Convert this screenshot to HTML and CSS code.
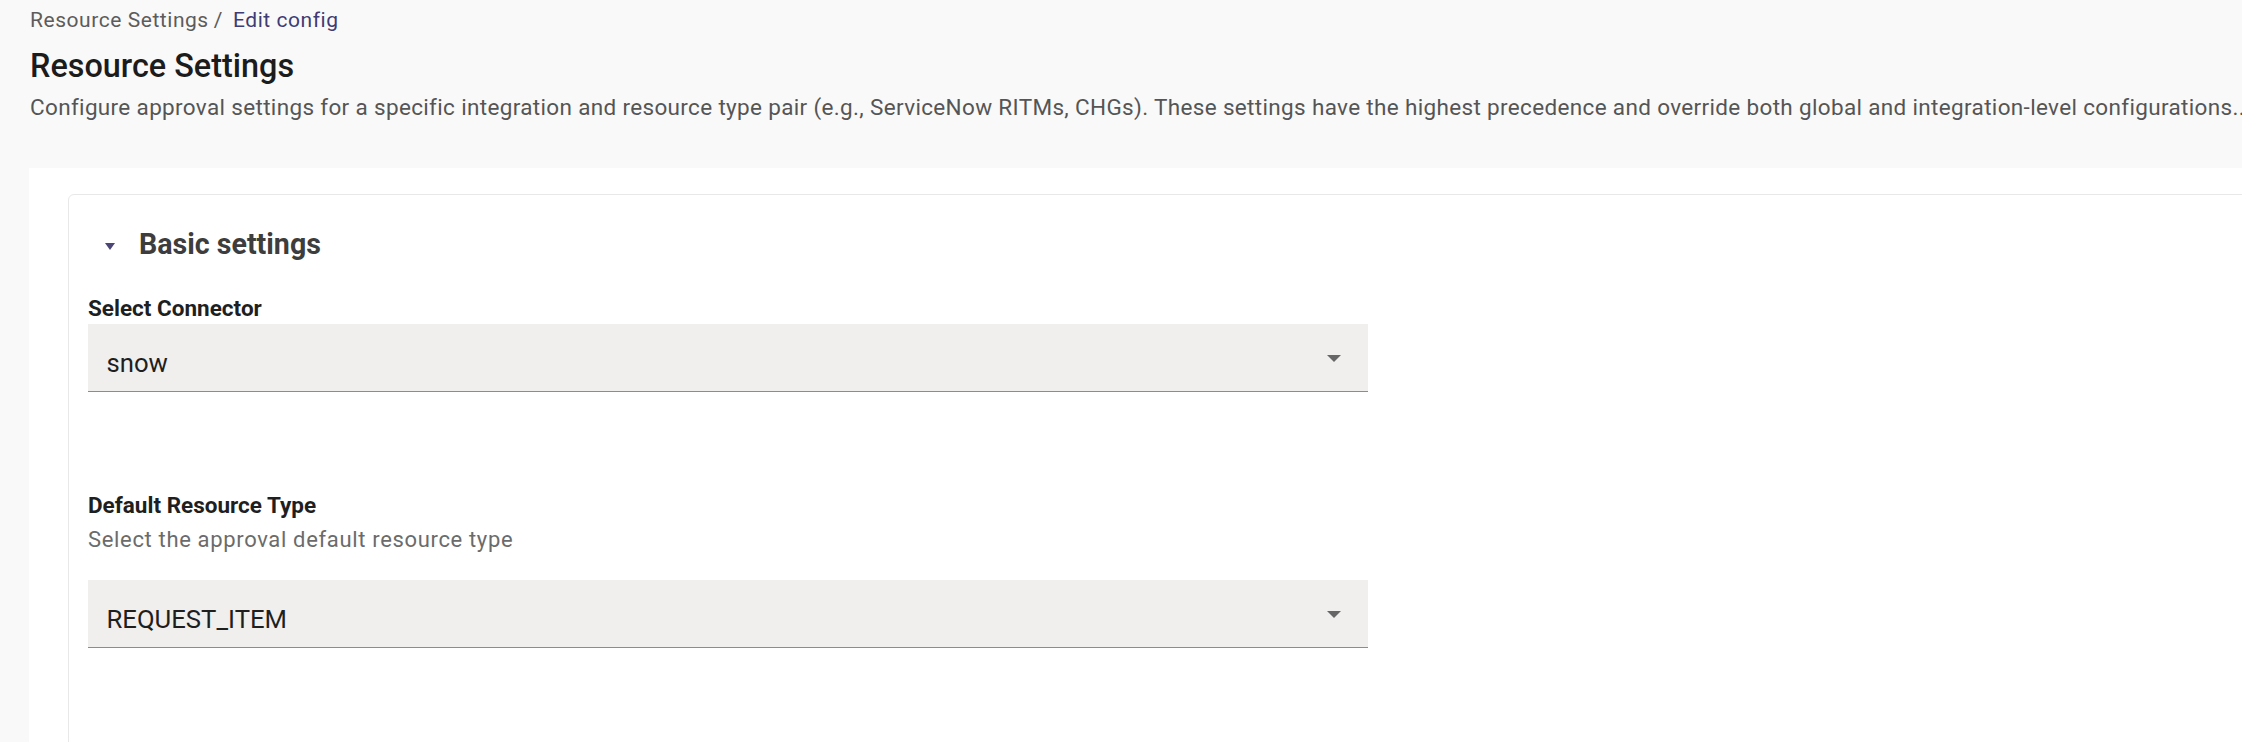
FILE: index.html
```html
<!DOCTYPE html>
<html lang="en">
<head>
<meta charset="utf-8">
<title>Resource Settings</title>
<link rel="stylesheet" href="styles.css">
</head>
<body>
<header class="page-header">
  <nav class="breadcrumb">
    <span class="crumb">Resource Settings</span><span class="sep">/</span><a class="crumb-current">Edit config</a>
  </nav>
  <h1 class="title">Resource Settings</h1>
  <p class="description">Configure approval settings for a specific integration and resource type pair (e.g., ServiceNow RITMs, CHGs). These settings have the highest precedence and override both global and integration-level configurations..</p>
</header>
<main class="content">
  <section class="card">
    <div class="section-head">
      <svg class="section-caret" width="10" height="7" viewBox="0 0 10 7"><path d="M0 0 L10 0 L5 7 Z" fill="#4b4676"/></svg>
      <h2 class="section-title">Basic settings</h2>
    </div>
    <div class="field field-first">
      <label class="field-label">Select Connector</label>
      <div class="select">
        <span class="select-value">snow</span>
        <svg class="select-caret" width="14" height="7" viewBox="0 0 14 7"><path d="M0 0 L14 0 L7 7 Z" fill="#666"/></svg>
      </div>
    </div>
    <div class="field field-second">
      <label class="field-label">Default Resource Type</label>
      <div class="field-help">Select the approval default resource type</div>
      <div class="select select-spaced">
        <span class="select-value">REQUEST_ITEM</span>
        <svg class="select-caret" width="14" height="7" viewBox="0 0 14 7"><path d="M0 0 L14 0 L7 7 Z" fill="#666"/></svg>
      </div>
    </div>
  </section>
</main>
</body>
</html>
```
FILE: styles.css
```css
* { box-sizing: border-box; }
html, body {
  margin: 0;
  padding: 0;
  height: 100%;
  overflow: hidden;
}
body {
  background: #f9f9f9;
  font-family: Roboto, "Liberation Sans", Arial, sans-serif;
  color: #1f1f1f;
}
.page-header {
  padding: 6px 0 46px 30px;
}
.breadcrumb {
  font-size: 21px;
  line-height: 28px;
  letter-spacing: 0.55px;
  color: #5c5c5c;
  white-space: nowrap;
}
.sep {
  margin: 0 10px 0 5px;
}
.crumb-current {
  color: #3f3b75;
}
.title {
  margin: 11.5px 0 0;
  font-size: 32.4px;
  line-height: 40px;
  font-weight: 500;
  color: #1c1c1c;
}
.description {
  margin: 6.5px 0 0;
  font-size: 22.5px;
  line-height: 30px;
  letter-spacing: 0.34px;
  color: #555555;
  white-space: nowrap;
}
.content {
  margin-left: 29px;
  width: 2400px;
  height: 600px;
  background: #ffffff;
  padding: 26px 0 0 39px;
}
.card {
  border: 1px solid #e8e8e8;
  border-radius: 6px;
  height: 800px;
  padding: 29px 0 0 19px;
}
.section-head {
  display: flex;
  align-items: center;
  height: 40px;
}
.section-caret {
  margin-left: 17px;
  margin-right: 24px;
  margin-top: 4px;
}
.section-title {
  margin: 0;
  font-size: 28.6px;
  line-height: 40px;
  font-weight: 700;
  color: #3d3d3d;
}
.field-first {
  margin-top: 28.5px;
}
.field-second {
  margin-top: 98px;
}
.field-label {
  display: block;
  font-size: 22.5px;
  line-height: 30px;
  font-weight: 700;
  color: #1f1f1f;
}
.field-help {
  margin-top: 5.5px;
  font-size: 22px;
  line-height: 30px;
  letter-spacing: 0.66px;
  color: #6b6b6b;
}
.select {
  margin-top: 1px;
  width: 1280px;
  height: 68px;
  background: #f0efee;
  border-bottom: 1px solid #8c8c8c;
  display: flex;
  align-items: flex-start;
  justify-content: space-between;
  padding: 24px 27.5px 0 18.5px;
}
.select-spaced {
  margin-top: 24.5px;
}
.select-value {
  font-size: 25.7px;
  line-height: 30px;
  color: #1f1f1f;
}
.select-caret {
  margin-top: 7px;
}
```
